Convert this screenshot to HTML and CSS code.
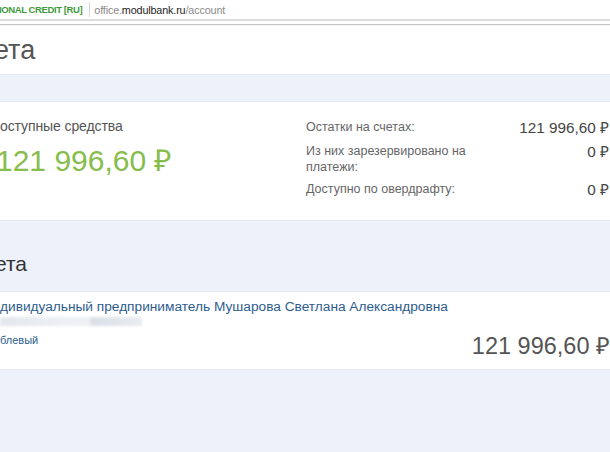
FILE: index.html
```html
<!DOCTYPE html>
<html lang="ru">
<head>
<meta charset="utf-8">
<link rel="stylesheet" href="styles.css">
</head>
<body>
<div class="addr">
  <span class="cert">IONAL CREDIT [RU]</span>
  <span class="sep"></span>
  <span class="url">office.<b>modulbank.ru</b>/account</span>
</div>
<div class="chrome-line"></div>
<header class="top">
  <h1 class="title">ета</h1>
</header>
<main class="main">
  <section class="card summary">
    <div class="avail">
      <div class="avail-label">оступные средства</div>
      <div class="avail-sum">121 996,60 ₽</div>
    </div>
    <div class="details">
      <div class="row"><span class="lbl">Остатки на счетах:</span><span class="val">121 996,60 ₽</span></div>
      <div class="row"><span class="lbl">Из них зарезервировано на платежи:</span><span class="val">0 ₽</span></div>
      <div class="row"><span class="lbl">Доступно по овердрафту:</span><span class="val">0 ₽</span></div>
    </div>
  </section>
  <h2 class="sec">ета</h2>
  <section class="card account">
    <div class="acc-left">
      <a class="acc-name">дивидуальный предприниматель Мушарова Светлана Александровна</a>
      <div class="blur"><span class="b1"></span><span class="b2"></span></div>
      <div class="acc-type">блевый</div>
    </div>
    <div class="acc-sum">121 996,60 ₽</div>
  </section>
</main>
</body>
</html>
```
FILE: styles.css
```css
html, body {
  margin: 0;
  padding: 0;
  width: 610px;
  height: 452px;
  overflow: hidden;
  background: #edf1f9;
  font-family: "Liberation Sans", Arial, sans-serif;
}
.addr {
  height: 19px;
  background: #fff;
  display: flex;
  align-items: center;
}
.cert {
  color: #3f9a3c;
  font-weight: 700;
  font-size: 9.5px;
  letter-spacing: -0.4px;
  margin-left: -1px;
}
.sep {
  width: 1px;
  height: 15px;
  background: #d6d6d6;
  margin: 0 4px 0 7px;
}
.url {
  color: #8a8a8a;
  font-size: 10.8px;
  letter-spacing: -0.15px;
}
.url b {
  color: #222;
  font-weight: 400;
}
.chrome-line {
  height: 3px;
  border-top: 2px solid #dcdcdc;
  border-bottom: 1px solid #c4c4c4;
  background: #fff;
}
.top {
  height: 50px;
  background: #fff;
  border-top: 1px solid #f4f4f4;
  border-bottom: 1px solid #e6eaf2;
  box-sizing: border-box;
}
.title {
  margin: 0 0 0 -6px;
  font-weight: 400;
  font-size: 27px;
  color: #555;
  line-height: 28px;
  padding-top: 10px;
}
.main {
  padding-top: 26px;
}
.card {
  background: #fff;
  border-top: 1px solid #e6ebf3;
  border-bottom: 1px solid #e3e8f1;
}
.summary {
  height: 120px;
  box-sizing: border-box;
  display: flex;
}
.avail {
  width: 306px;
  padding-top: 16px;
}
.avail-label {
  font-size: 14px;
  color: #555;
  line-height: 17px;
  letter-spacing: -0.1px;
}
.avail-sum {
  font-size: 30px;
  color: #86bd4c;
  margin-left: -4px;
  margin-top: 9px;
  line-height: 34px;
  white-space: nowrap;
}
.details {
  flex: 1;
  padding-top: 17px;
  display: flex;
  flex-direction: column;
  gap: 6px;
}
.row {
  display: flex;
  justify-content: space-between;
  align-items: flex-start;
}
.lbl {
  width: 175px;
  font-size: 12.5px;
  line-height: 16px;
  color: #666;
}
.val {
  font-size: 15.3px;
  line-height: 18px;
  color: #444;
  margin-right: 1px;
  white-space: nowrap;
}
.sec {
  margin: 0 0 0 -5px;
  box-sizing: border-box;
  padding-top: 31px;
  font-size: 21px;
  font-weight: 400;
  line-height: 24px;
  color: #333;
  height: 70px;
}
.account {
  height: 79px;
  box-sizing: border-box;
  display: flex;
  justify-content: space-between;
}
.acc-left {
  padding-top: 6px;
}
.acc-name {
  display: block;
  font-size: 13.7px;
  line-height: 17px;
  color: #2d5d8e;
  white-space: nowrap;
}
.blur {
  display: flex;
  margin-top: 2px;
  height: 9px;
}
.b1 {
  width: 90px;
  background: linear-gradient(90deg, #e3e6ee, #eceef3 60%, #eff1f5);
  filter: blur(1.5px);
}
.b2 {
  width: 52px;
  background: linear-gradient(90deg, #dadee6, #e8ebf0);
  filter: blur(1.5px);
}
.acc-type {
  margin-top: 8px;
  font-size: 11px;
  line-height: 13px;
  color: #2d5d8e;
}
.acc-sum {
  align-self: flex-start;
  margin-top: 40px;
  font-size: 23.5px;
  line-height: 28px;
  color: #555;
  margin-right: 0;
  white-space: nowrap;
}
```
